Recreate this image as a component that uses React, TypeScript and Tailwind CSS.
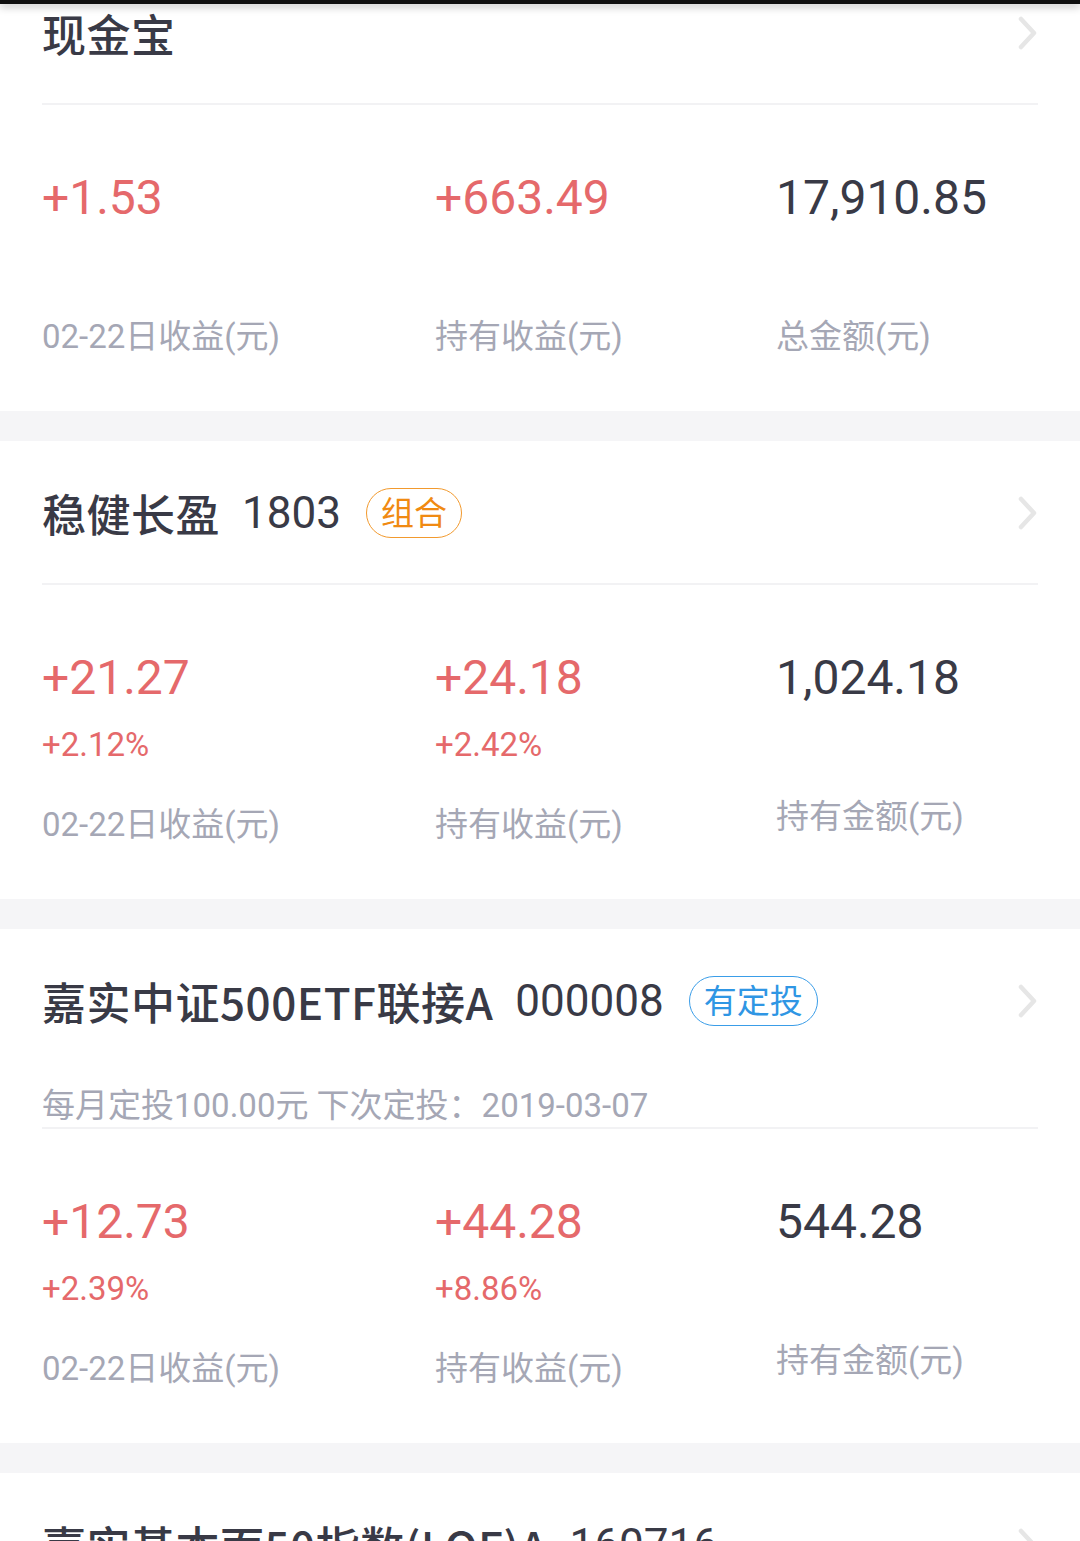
import React from 'react';

type Stat = {
  value: string;
  pct?: string;
  label: string;
  tone: 'up' | 'plain';
};

type Fund = {
  name: string;
  code?: string;
  badge?: { text: string; tone: 'orange' | 'blue' };
  info?: string;
  stats?: Stat[];
};

const funds: Fund[] = [
  {
    name: '现金宝',
    stats: [
      { value: '+1.53', label: '02-22日收益(元)', tone: 'up' },
      { value: '+663.49', label: '持有收益(元)', tone: 'up' },
      { value: '17,910.85', label: '总金额(元)', tone: 'plain' },
    ],
  },
  {
    name: '稳健长盈',
    code: '1803',
    badge: { text: '组合', tone: 'orange' },
    stats: [
      { value: '+21.27', pct: '+2.12%', label: '02-22日收益(元)', tone: 'up' },
      { value: '+24.18', pct: '+2.42%', label: '持有收益(元)', tone: 'up' },
      { value: '1,024.18', label: '持有金额(元)', tone: 'plain' },
    ],
  },
  {
    name: '嘉实中证500ETF联接A',
    code: '000008',
    badge: { text: '有定投', tone: 'blue' },
    info: '每月定投100.00元 下次定投：2019-03-07',
    stats: [
      { value: '+12.73', pct: '+2.39%', label: '02-22日收益(元)', tone: 'up' },
      { value: '+44.28', pct: '+8.86%', label: '持有收益(元)', tone: 'up' },
      { value: '544.28', label: '持有金额(元)', tone: 'plain' },
    ],
  },
  {
    name: '嘉实基本面50指数(LOF)A',
    code: '160716',
  },
];

const Chevron = () => (
  <svg width="22" height="34" viewBox="0 0 22 34" fill="none" className="shrink-0 -mr-[1px]">
    <path d="M4 3 L17 17 L4 31" stroke="#e6e6e6" strokeWidth="4.5" strokeLinecap="round" strokeLinejoin="round" />
  </svg>
);

const StatColumn: React.FC<{ stat: Stat }> = ({ stat }) => (
  <div className="flex flex-col">
    <div
      className={`text-[48px] leading-[56px] font-['Roboto',sans-serif] ${
        stat.tone === 'up' ? 'text-[#e5696b]' : 'text-[#393a46]'
      }`}
    >
      {stat.value}
    </div>
    {stat.pct ? (
      <>
        <div className="mt-[19px] text-[33px] leading-[40px] text-[#e5696b] font-['Roboto',sans-serif]">
          {stat.pct}
        </div>
        <div className="mt-[40px] text-[33px] leading-[40px] text-[#a5a7b5]">{stat.label}</div>
      </>
    ) : (
      <div className="mt-[91px] text-[33px] leading-[40px] text-[#a5a7b5]">{stat.label}</div>
    )}
  </div>
);

const FundCard: React.FC<{ fund: Fund }> = ({ fund }) => (
  <div className="bg-white">
    <div className="px-[42px] pt-[44px]">
      <div className="flex items-center justify-between h-[56px]">
        <div className="flex items-center whitespace-nowrap">
          <span className="text-[44px] leading-[56px] font-medium tracking-[0.5px] text-[#393a46] font-['Noto_Sans_CJK_SC',sans-serif]">
            {fund.name}
          </span>
          {fund.code && (
            <span className="ml-[22px] text-[44px] leading-[56px] text-[#393a46] font-['Roboto',sans-serif]">
              {fund.code}
            </span>
          )}
          {fund.badge && (
            <span
              className={`ml-[25px] h-[50px] px-[14px] rounded-full border-[1.5px] flex items-center text-[33px] leading-none ${
                fund.badge.tone === 'orange'
                  ? 'border-[#f29a2e] text-[#f08a12]'
                  : 'border-[#3a9de8] text-[#2f96e4]'
              }`}
            >
              {fund.badge.text}
            </span>
          )}
        </div>
        <Chevron />
      </div>
      {fund.info ? (
        <div className="mt-[57px] mb-[1px] text-[33px] leading-[40px] text-[#a5a7b5] whitespace-nowrap">
          {fund.info}
        </div>
      ) : (
        <div className="h-[42px]" />
      )}
      {fund.stats && <div className="h-[2px] bg-[#f2f2f4]" />}
    </div>
    {fund.stats && (
      <div className="grid grid-cols-[393px_341px_1fr] pl-[42px] pt-[65px] pb-[54px]">
        {fund.stats.map((s) => (
          <StatColumn key={s.label + s.value} stat={s} />
        ))}
      </div>
    )}
  </div>
);

export default function App() {
  return (
    <div className="relative w-[1080px] h-[1541px] overflow-hidden bg-[#f5f5f7] font-['Roboto','Noto_Sans_CJK_SC',sans-serif]">
      <div className="absolute top-0 left-0 right-0 h-[4px] bg-[#111] shadow-[0_2px_8px_rgba(0,0,0,0.35)] z-10" />
      <div className="-mt-[39px] flex flex-col gap-[30px]">
        {funds.map((f) => (
          <FundCard key={f.name} fund={f} />
        ))}
      </div>
    </div>
  );
}
